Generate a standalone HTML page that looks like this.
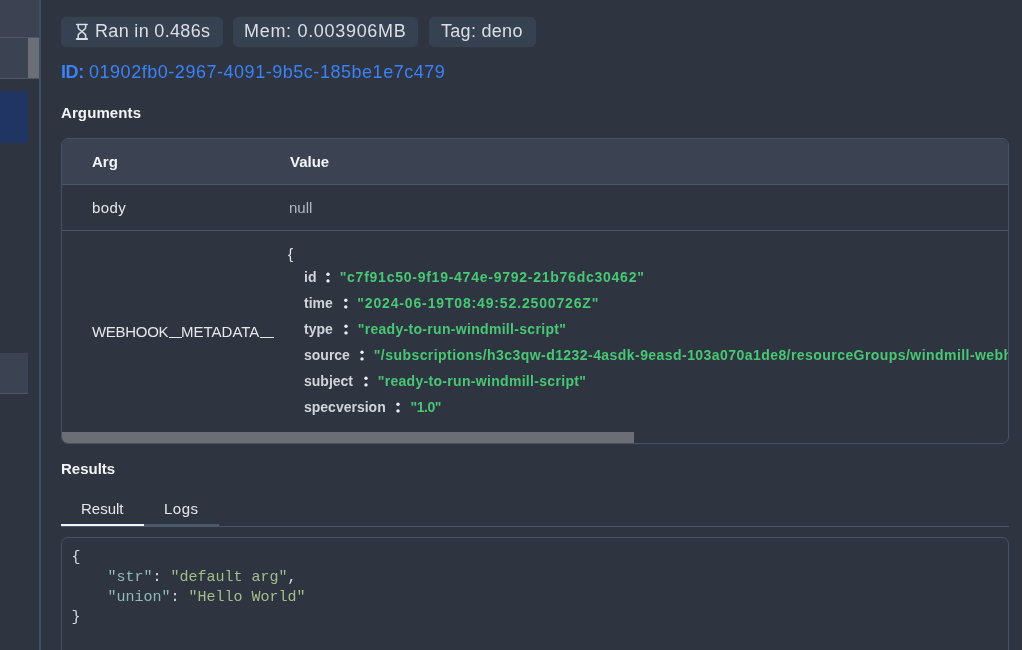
<!DOCTYPE html>
<html><head><meta charset="utf-8">
<style>
*{box-sizing:border-box;margin:0;padding:0}
body{will-change:transform;}html,body{width:1022px;height:650px;overflow:hidden;background:#2e3440;font-family:"Liberation Sans",sans-serif;color:#e5e7eb}
.abs{position:absolute}
.side{left:0;top:0;width:39px;height:650px}
.vline{left:39px;top:0;width:2px;height:650px;background:#404d62}
.badge{position:absolute;top:17px;height:30px;background:#364152;border-radius:5px;color:#dcdfe4;font-size:18px;line-height:30px;white-space:nowrap}
.txt{position:absolute;white-space:nowrap}
.tbl{left:61px;top:138px;width:948px;height:306px;border:1px solid #475264;border-radius:7px;overflow:hidden}
.hdr{left:0;top:0;width:100%;height:46px;background:#3b4252;border-bottom:1px solid #4c566a}
.row1{left:0;top:46px;width:100%;height:46px;border-bottom:1px solid #4c566a}
.key{font-weight:bold;color:#d1d5db;font-size:14px}
.str{color:#48c774;font-weight:bold;font-size:14px}
.colon{font-weight:bold;color:#d1d5db;font-size:14px}
.mono{font-family:"Liberation Mono",monospace;font-size:15px;line-height:20px;white-space:pre}
</style></head><body>
<!-- left sidebar -->
<div class="abs" style="left:0;top:0;width:39px;height:37px;background:#3c4252"></div>
<div class="abs" style="left:0;top:37px;width:39px;height:42px;background:#3b4252;border-top:1px solid #4c566a;border-bottom:1px solid #4c566a"></div>
<div class="abs" style="left:28px;top:38px;width:11px;height:40px;background:#6b6e75"></div>
<div class="abs" style="left:0;top:91px;width:28px;height:52px;background:#213564"></div>
<div class="abs" style="left:0;top:353px;width:28px;height:41px;background:#3b4252;border-bottom:1px solid #4c566a"></div>
<div class="abs vline"></div>

<!-- badges -->
<div class="badge" style="left:61px;width:162px">
  <svg class="abs" style="left:0;top:0" width="40" height="30" viewBox="0 0 40 30"><path d="M15.7 7.4H26.2M17.2 7.4V10.6Q17.2 11.3 17.8 11.9L20.9 14.5L24 11.9Q24.6 11.3 24.6 10.6V7.4M17.2 22V18.4Q17.2 17.7 17.8 17.1L20.9 14.5L24 17.1Q24.6 17.7 24.6 18.4V22" fill="none" stroke="#dcdfe4" stroke-width="1.5" stroke-linecap="round" stroke-linejoin="round"/><path d="M15.8 22H26.1" stroke="#dcdfe4" stroke-width="2" stroke-linecap="round"/></svg>
  <span class="txt" style="left:34px;top:-1px;letter-spacing:0.33px">Ran in 0.486s</span>
</div>
<div class="badge" style="left:233px;width:185px"><span class="txt" style="left:11px;top:-1px;letter-spacing:0.69px">Mem: 0.003906MB</span></div>
<div class="badge" style="left:429px;width:107px"><span class="txt" style="left:12px;top:-1px;letter-spacing:0.29px">Tag: deno</span></div>

<!-- ID -->
<div class="txt" style="left:61px;top:62px;font-size:18px;color:#3b82f6;font-weight:bold;letter-spacing:-0.4px">ID:</div><div class="txt" style="left:89px;top:62px;font-size:18px;color:#3b82f6;letter-spacing:0.53px">01902fb0-2967-4091-9b5c-185be1e7c479</div>

<div class="txt" style="left:61px;top:104px;font-size:15px;font-weight:bold;color:#f3f4f6;letter-spacing:0.1px">Arguments</div>

<!-- table -->
<div class="abs tbl">
  <div class="abs hdr"></div>
  <div class="abs row1"></div>
  <div class="txt" style="left:30px;top:14px;font-size:15px;font-weight:bold;color:#f3f4f6">Arg</div>
  <div class="txt" style="left:228px;top:14px;font-size:15px;font-weight:bold;color:#f3f4f6">Value</div>
  <div class="txt" style="left:30px;top:60px;font-size:15px;color:#e5e7eb;letter-spacing:0.4px">body</div>
  <div class="txt" style="left:227px;top:60px;font-size:15px;color:#b4b9c1">null</div>
  <div class="txt" style="left:30px;top:184px;font-size:15px;color:#e5e7eb;letter-spacing:-0.3px">WEBHOOK</div><div class="abs" style="left:106.5px;top:197.6px;width:13.5px;height:1.4px;background:#e5e7eb"></div><div class="txt" style="left:119px;top:184px;font-size:15px;color:#e5e7eb">METADATA</div><div class="abs" style="left:197.5px;top:197.6px;width:14.3px;height:1.4px;background:#e5e7eb"></div>
  <div class="txt" style="left:226px;top:106px;font-size:15px;color:#e5e7eb">{</div>
  <div class="txt key" style="left:242px;top:130px">id</div><div class="txt str" style="left:277.7px;top:130px;letter-spacing:0.75px">"c7f91c50-9f19-474e-9792-21b76dc30462"</div>
  <div class="txt key" style="left:242px;top:156px">time</div><div class="txt str" style="left:295.3px;top:156px;letter-spacing:0.85px">"2024-06-19T08:49:52.2500726Z"</div>
  <div class="txt key" style="left:242px;top:182px">type</div><div class="txt str" style="left:295.7px;top:182px;letter-spacing:0.31px">"ready-to-run-windmill-script"</div>
  <div class="txt key" style="left:242px;top:208px">source</div><div class="txt str" style="left:311.8px;top:208px;letter-spacing:0.44px">"/subscriptions/h3c3qw-d1232-4asdk-9easd-103a070a1de8/resourceGroups/windmill-webhooks/providers/Microsoft.EventGrid"</div>
  <div class="txt key" style="left:242px;top:234px">subject</div><div class="txt str" style="left:315.7px;top:234px;letter-spacing:0.31px">"ready-to-run-windmill-script"</div>
  <div class="txt key" style="left:242px;top:260px">specversion</div><div class="txt str" style="left:348.6px;top:260px;letter-spacing:-0.46px">"1.0"</div>
  <svg class="abs" style="left:0;top:0" width="946" height="304" fill="#eceef1"><circle cx="266.0" cy="135.2" r="1.7"/><circle cx="266.0" cy="141.9" r="1.7"/><circle cx="283.8" cy="161.2" r="1.7"/><circle cx="283.8" cy="167.9" r="1.7"/><circle cx="284.0" cy="187.2" r="1.7"/><circle cx="284.0" cy="193.9" r="1.7"/><circle cx="300.0" cy="213.2" r="1.7"/><circle cx="300.0" cy="219.9" r="1.7"/><circle cx="304.0" cy="239.2" r="1.7"/><circle cx="304.0" cy="245.9" r="1.7"/><circle cx="336.0" cy="265.2" r="1.7"/><circle cx="336.0" cy="271.9" r="1.7"/></svg>
  <div class="abs" style="left:0;top:293px;width:572px;height:11px;background:#6b6e75"></div>
</div>

<div class="txt" style="left:61px;top:460px;font-size:15px;font-weight:bold;color:#f3f4f6">Results</div>

<!-- tabs -->
<div class="abs" style="left:61px;top:526px;width:948px;height:1px;background:#4c566a"></div>
<div class="abs" style="left:61px;top:524px;width:83px;height:2px;background:#f3f4f6"></div>
<div class="abs" style="left:144px;top:524px;width:75px;height:3px;background:#4b5869"></div>
<div class="txt" style="left:81px;top:500px;font-size:15px;color:#e5e7eb">Result</div>
<div class="txt" style="left:164px;top:500px;font-size:15px;color:#e5e7eb;letter-spacing:0.5px">Logs</div>

<!-- code box -->
<div class="abs" style="left:61px;top:537px;width:948px;height:130px;border:1px solid #475264;border-radius:7px"></div>
<div class="abs mono" style="left:71.5px;top:548px;color:#d8dee9">{
    <span style="color:#8fbcbb">"str"</span>: <span style="color:#a3be8c">"default arg"</span>,
    <span style="color:#8fbcbb">"union"</span>: <span style="color:#a3be8c">"Hello World"</span>
}</div>
</body></html>
